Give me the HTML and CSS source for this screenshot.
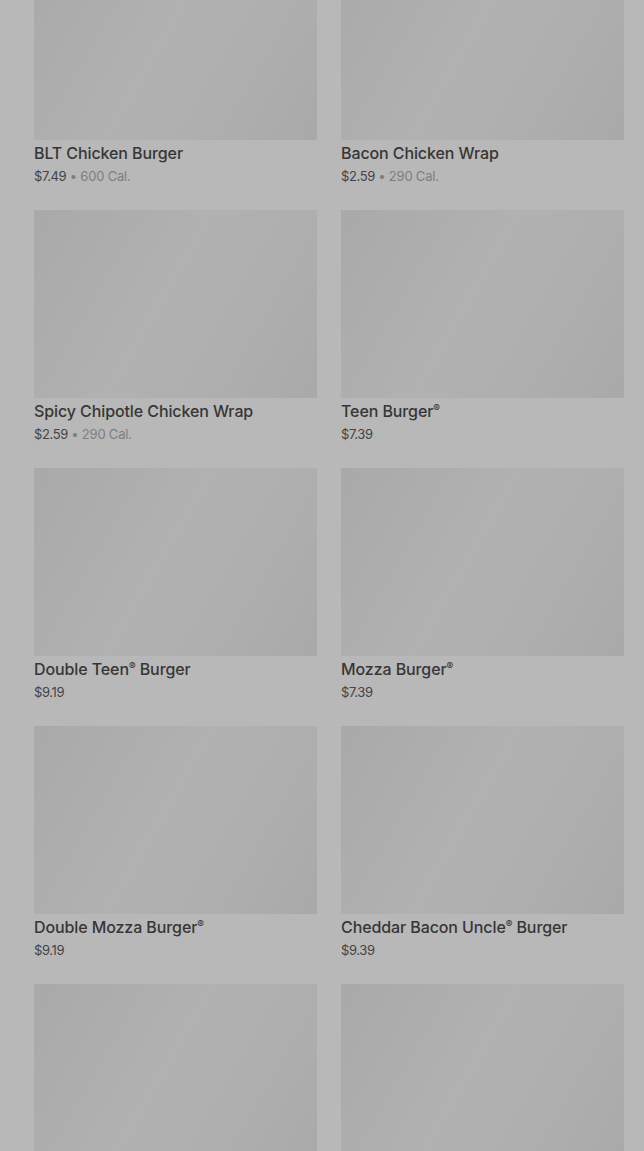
FILE: index.html
```html
<!DOCTYPE html>
<html lang="en">

<head>
    <meta charset="UTF-8">
    <meta name="viewport" content="width=device-width, initial-scale=1.0">
    <title>Menu</title>
    <link rel="stylesheet" href="styles.css">
</head>

<body>

    <div class="menu-grid">
        <div class="item">
            <div class="item-img"></div>
            <div class="item-name">BLT Chicken Burger</div>
            <div class="item-meta">$7.49<span class="cal"> • 600 Cal.</span></div>
        </div>
        <div class="item">
            <div class="item-img"></div>
            <div class="item-name">Bacon Chicken Wrap</div>
            <div class="item-meta">$2.59<span class="cal"> • 290 Cal.</span></div>
        </div>
        <div class="item">
            <div class="item-img"></div>
            <div class="item-name">Spicy Chipotle Chicken Wrap</div>
            <div class="item-meta">$2.59<span class="cal"> • 290 Cal.</span></div>
        </div>
        <div class="item">
            <div class="item-img"></div>
            <div class="item-name">Teen Burger<sup>®</sup></div>
            <div class="item-meta">$7.39</div>
        </div>
        <div class="item">
            <div class="item-img"></div>
            <div class="item-name">Double Teen<sup>®</sup> Burger</div>
            <div class="item-meta">$9.19</div>
        </div>
        <div class="item">
            <div class="item-img"></div>
            <div class="item-name">Mozza Burger<sup>®</sup></div>
            <div class="item-meta">$7.39</div>
        </div>
        <div class="item">
            <div class="item-img"></div>
            <div class="item-name">Double Mozza Burger<sup>®</sup></div>
            <div class="item-meta">$9.19</div>
        </div>
        <div class="item">
            <div class="item-img"></div>
            <div class="item-name">Cheddar Bacon Uncle<sup>®</sup> Burger</div>
            <div class="item-meta">$9.39</div>
        </div>
        <div class="item">
            <div class="item-img"></div>
        </div>
        <div class="item">
            <div class="item-img"></div>
        </div>
    </div>

</body>

</html>
```

FILE: styles.css
```css
body {
    margin: 0;
    background-color: #b8b8b8;
    font-family: Inter, Roboto, "Liberation Sans", sans-serif;
    overflow: hidden;
}

.menu-grid {
    display: grid;
    grid-template-columns: 283px 283px;
    column-gap: 24px;
    row-gap: 24px;
    padding: 0 20px 0 34px;
    margin-top: -48px;
}

.item-img {
    height: 188px;
    background: linear-gradient(120deg, #a9a9a9 0%, #b1b1b1 45%, #afafaf 70%, #a9a9a9 100%);
}

.item-name {
    margin-top: 2px;
    font-size: 16px;
    font-weight: 500;
    line-height: 22px;
    letter-spacing: -0.1px;
    color: #363636;
}

.item-name sup {
    font-size: 10px;
    vertical-align: 5px;
    line-height: 0;
}

.item-meta {
    margin-top: 2px;
    font-size: 13px;
    line-height: 20px;
    color: #444;
    letter-spacing: -0.4px;
}

.item-meta .cal {
    color: #7e7e7e;
    letter-spacing: -0.2px;
}
```
